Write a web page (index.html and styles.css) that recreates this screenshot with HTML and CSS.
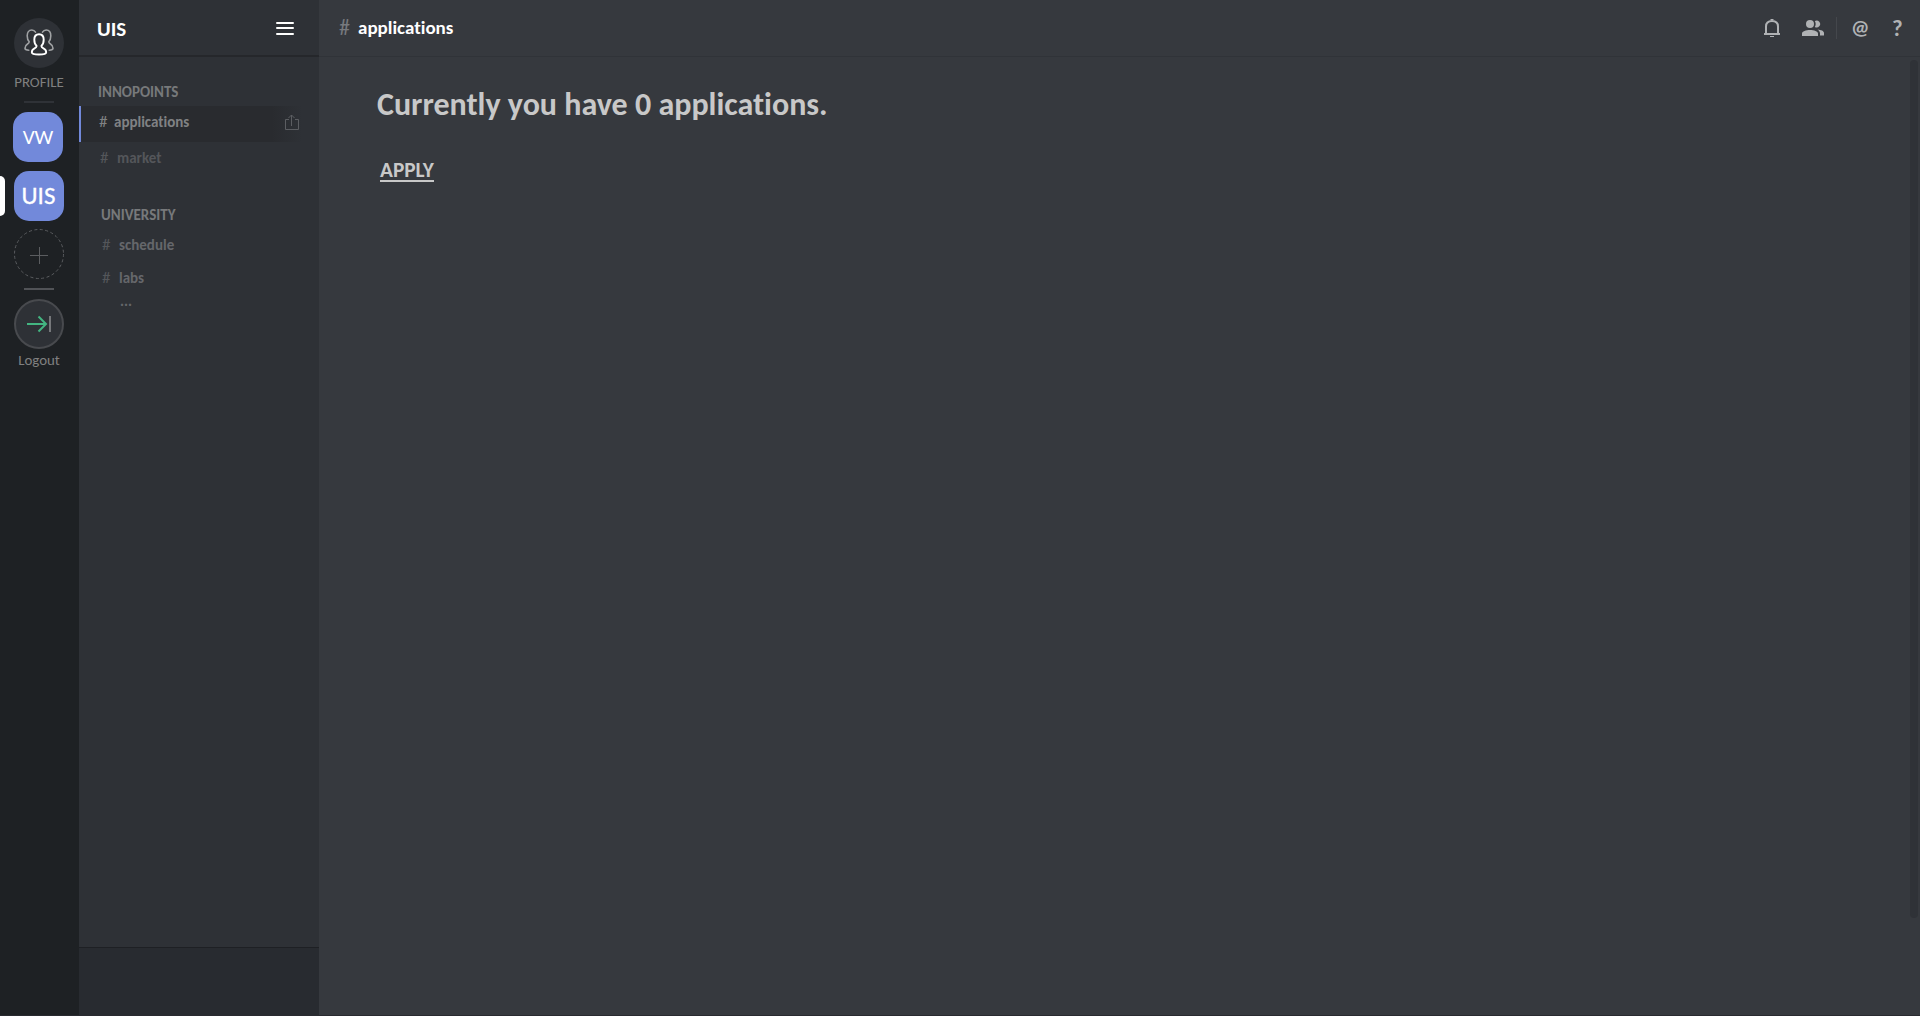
FILE: index.html
```html
<!DOCTYPE html>
<html lang="en">
<head>
<meta charset="utf-8">
<title>UIS</title>
<link rel="stylesheet" href="styles.css">
</head>
<body>
<div class="app">
  <nav class="rail">
    <div class="avatar">
      <svg width="32" height="28" viewBox="0 0 32 28" fill="none" stroke-linecap="round" stroke-linejoin="round">
        <g stroke="#a0a2a4" stroke-width="1.6">
          <path d="M12.5 4.2C11.7 2.8 10.4 2 8.8 2C5.8 2 4.2 4.5 4.2 7.8C4.2 10.5 5 12.6 6.2 13.8C6.2 16.5 2 15.6 2 20.3C2 21.8 3.5 22.2 5.8 22.3"/>
          <path d="M19.500 4.2C20.300 2.8 21.600 2 23.200 2C26.200 2 27.800 4.500 27.800 7.800C27.800 10.500 27 12.600 25.800 13.800C25.800 16.500 30 15.600 30 20.300C30 21.800 28.500 22.200 26.200 22.300"/>
        </g>
        <path stroke="#fff" stroke-width="1.9" d="M16 6.300C12.900 6.300 11.300 8.600 11.300 11.800C11.300 14.300 12.200 16.700 13.600 17.900C13.600 21 8.800 19.600 8.800 24.200C8.800 26 11 26.500 16 26.500S23.200 26 23.200 24.200C23.200 19.600 18.400 21 18.400 17.900C19.800 16.700 20.700 14.300 20.700 11.800C20.700 8.600 19.100 6.300 16 6.300Z"/>
      </svg>
    </div>
    <span class="rail-label profile-label">PROFILE</span>
    <i class="divider"></i>
    <div class="server vw">VW</div>
    <div class="server uis">UIS<i class="active-pill"></i></div>
    <svg class="add" width="50" height="50" viewBox="0 0 50 50" fill="none" stroke="#5b5d60">
      <circle cx="25" cy="25" r="24.500" stroke-dasharray="3 2.500"/>
      <path d="M16 26.500H34M25.500 18V35"/>
    </svg>
    <i class="divider light"></i>
    <div class="logout">
      <svg width="26" height="18" viewBox="0 0 26 18" fill="none" stroke-width="2">
        <path stroke="#43b581" d="M1 9H20M12.500 1.500L20 9L12.500 16.500"/>
        <path stroke="#76787b" d="M24 1V17"/>
      </svg>
    </div>
    <span class="rail-label logout-label">Logout</span>
  </nav>
  <aside class="sidebar">
    <header class="sidebar-head">
      <h1>UIS</h1>
      <span class="burger"><i></i><i></i><i></i></span>
    </header>
    <div class="channels">
      <h2>INNOPOINTS</h2>
      <div class="channel selected"><span class="hash">#</span><span>applications</span>
        <svg class="share" width="14" height="17" viewBox="0 0 14 17" fill="none" stroke="#5c5e62"><path d="M4 5.500H.5V15.500H13.500V5.500H10M6.500 12V1M3.500 4L6.500 1L9.500 4"/></svg>
      </div>
      <div class="channel market"><span class="hash">#</span><span>market</span></div>
      <h2 class="second">UNIVERSITY</h2>
      <div class="channel school"><span class="hash">#</span><span>schedule</span></div>
      <div class="channel school"><span class="hash">#</span><span>labs</span></div>
      <div class="more">...</div>
    </div>
    <footer class="sidebar-foot"></footer>
  </aside>
  <main class="content">
    <header class="topbar">
      <span class="top-hash">#</span><span class="top-title">applications</span>
      <div class="tools">
        <svg class="bell" width="16" height="19" viewBox="0 0 16 19" fill="none" stroke="#b0b2b4" stroke-width="2"><path d="M2 15V7.500C2 3.500 4.500 2 8 2S14 3.500 14 7.500V15M0 15H16"/><path stroke-width="1" d="M6.500 .5H9.500M6 17.500H10"/></svg>
        <svg class="people" width="22" height="16" viewBox="0 0 22 16" fill="#b0b2b4"><circle cx="8" cy="4" r="4"/><path d="M0 16V13.500C0 11.300 4 10 8 10S16 11.300 16 13.500V16ZM12.800 1A3.500 3.500 0 1 1 12.800 7C14 5.300 14 2.700 12.800 1ZM15.500 9.500C19 9.800 22 11 22 13V15.500H18V13.500C18 11.800 17 10.500 15.500 9.500Z"/></svg>
        <i class="rule"></i>
        <span class="at">@</span>
        <span class="help">?</span>
      </div>
    </header>
    <section class="panel">
      <div class="message">
        <p class="headline">Currently you have 0 applications.</p>
        <a class="apply">APPLY</a>
      </div>
      <i class="scrollbar"></i>
    </section>
  </main>
</div>
</body>
</html>
```
FILE: styles.css
```css
* { box-sizing: border-box; }
body { margin: 0; background: #36393e; font-family: Carlito, "Open Sans", sans-serif; font-variant-ligatures: none; color: #c8c8c8; }
h1, h2, p { margin: 0; }
svg, i { display: block; flex: none; }
.app { display: flex; width: 1920px; height: 1016px; border-bottom: 1px solid #292a30; }

.rail { width: 79px; background: #1e2124; display: flex; flex-direction: column; align-items: center; padding: 18px 1px 0 0; }
.avatar { width: 50px; height: 50px; border-radius: 50%; background: #2e3136; display: flex; align-items: center; justify-content: center; padding-bottom: 2px; }
.rail-label { color: #808080; font-size: 14.900px; line-height: 20px; white-space: nowrap; }
.profile-label { margin-top: 4px; }
.divider { width: 30px; height: 2px; margin-top: 9px; background: #2f3237; }
.server { position: relative; width: 50px; height: 50px; border-radius: 15px; background: #7289da; color: #fff; line-height: 50px; text-align: center; flex: none; }
.vw { margin: 9px 2px 0 0; font-size: 21px; }
.uis { margin-top: 9px; padding-right: 1px; font-size: 25px; -webkit-text-stroke: .3px #fff; }
.active-pill { position: absolute; left: -14px; top: 5px; width: 5px; height: 40px; border-radius: 0 5px 5px 0; background: #fff; }
.add { margin-top: 8px; }
.light { margin-top: 9px; background: #515357; }
.logout { width: 50px; height: 50px; margin-top: 9px; border: 2px solid #484a4e; border-radius: 50%; background: #2e3136; display: flex; align-items: center; justify-content: center; flex: none; }
.logout-label { margin-top: 1px; }

.sidebar { width: 240px; background: #2e3136; display: flex; flex-direction: column; }
.sidebar-head { height: 57px; border-bottom: 2px solid #25272b; display: flex; align-items: center; padding: 2px 25px 0 18px; }
.sidebar-head h1 { color: #fff; font-size: 21px; line-height: 24px; }
.burger { margin: 0 0 1px auto; width: 18px; display: grid; gap: 3.500px; }
.burger i { height: 2px; border-radius: 1px; background: #fff; }
.channels { flex: 1; padding-top: 25px; }
.channels h2 { height: 24px; padding-left: 19px; color: #77797b; font-size: 15px; line-height: 20px; }
.channel { display: flex; align-items: center; padding: 0 0 2px 20px; height: 36px; color: #65676b; font-size: 15px; font-weight: 700; line-height: 20px; }
.hash { width: 17px; margin-left: 1px; font-size: 17px; font-weight: 400; color: #54565a; }
.selected { padding: 0 20px 4px 18px; border-left: 2px solid #7289da; background: linear-gradient(90deg, #292b2f 80%, #2e3136 93%); color: #808284; }
.selected .hash { width: 15px; margin-left: 0; color: #808284; }
.share { margin-left: auto; }
.market { height: 33px; color: #54565a; }
.channels .second { margin-top: 30px; padding-left: 22px; }
.school { height: 33px; padding-left: 22px; }
.more { padding-left: 41px; margin-top: -1px; font-size: 15px; line-height: 14px; font-weight: 700; color: #65676b; }
.sidebar-foot { height: 68px; background: #282b30; border-top: 1px solid #1e2024; }

.content { flex: 1; display: flex; flex-direction: column; }
.topbar { height: 57px; border-bottom: 1px solid #303338; display: flex; align-items: center; padding: 0 16px 0 20px; }
.top-hash { width: 19px; color: #777a7e; font-size: 22px; line-height: 24px; }
.top-title { color: #fff; font-size: 19px; line-height: 24px; padding-bottom: 1px; font-weight: 700; }
.tools { margin-left: auto; display: flex; align-items: center; color: #b0b2b4; font-weight: 700; }
.people { margin-left: 22px; }
.rule { width: 1px; height: 22px; margin-left: 12px; background: #44474c; }
.at { margin-left: 14px; width: 19px; font-size: 20.500px; line-height: 24px; padding-bottom: 2px; }
.help { margin-left: 22px; width: 12px; font-size: 23px; line-height: 24px; padding-bottom: 1px; }
.panel { flex: 1; display: flex; padding: 3px 2px 0 58px; justify-content: space-between; }
.message { padding-top: 24px; }
.headline { font-size: 32px; line-height: 42px; font-weight: 700; }
.apply { display: inline-block; margin: 34px 0 0 3px; font-size: 21.300px; line-height: 20px; font-weight: 700; border-bottom: 2px solid #c8c8c8; }
.scrollbar { width: 8px; height: 858px; border-radius: 4px; background: #2f3237; }
```
